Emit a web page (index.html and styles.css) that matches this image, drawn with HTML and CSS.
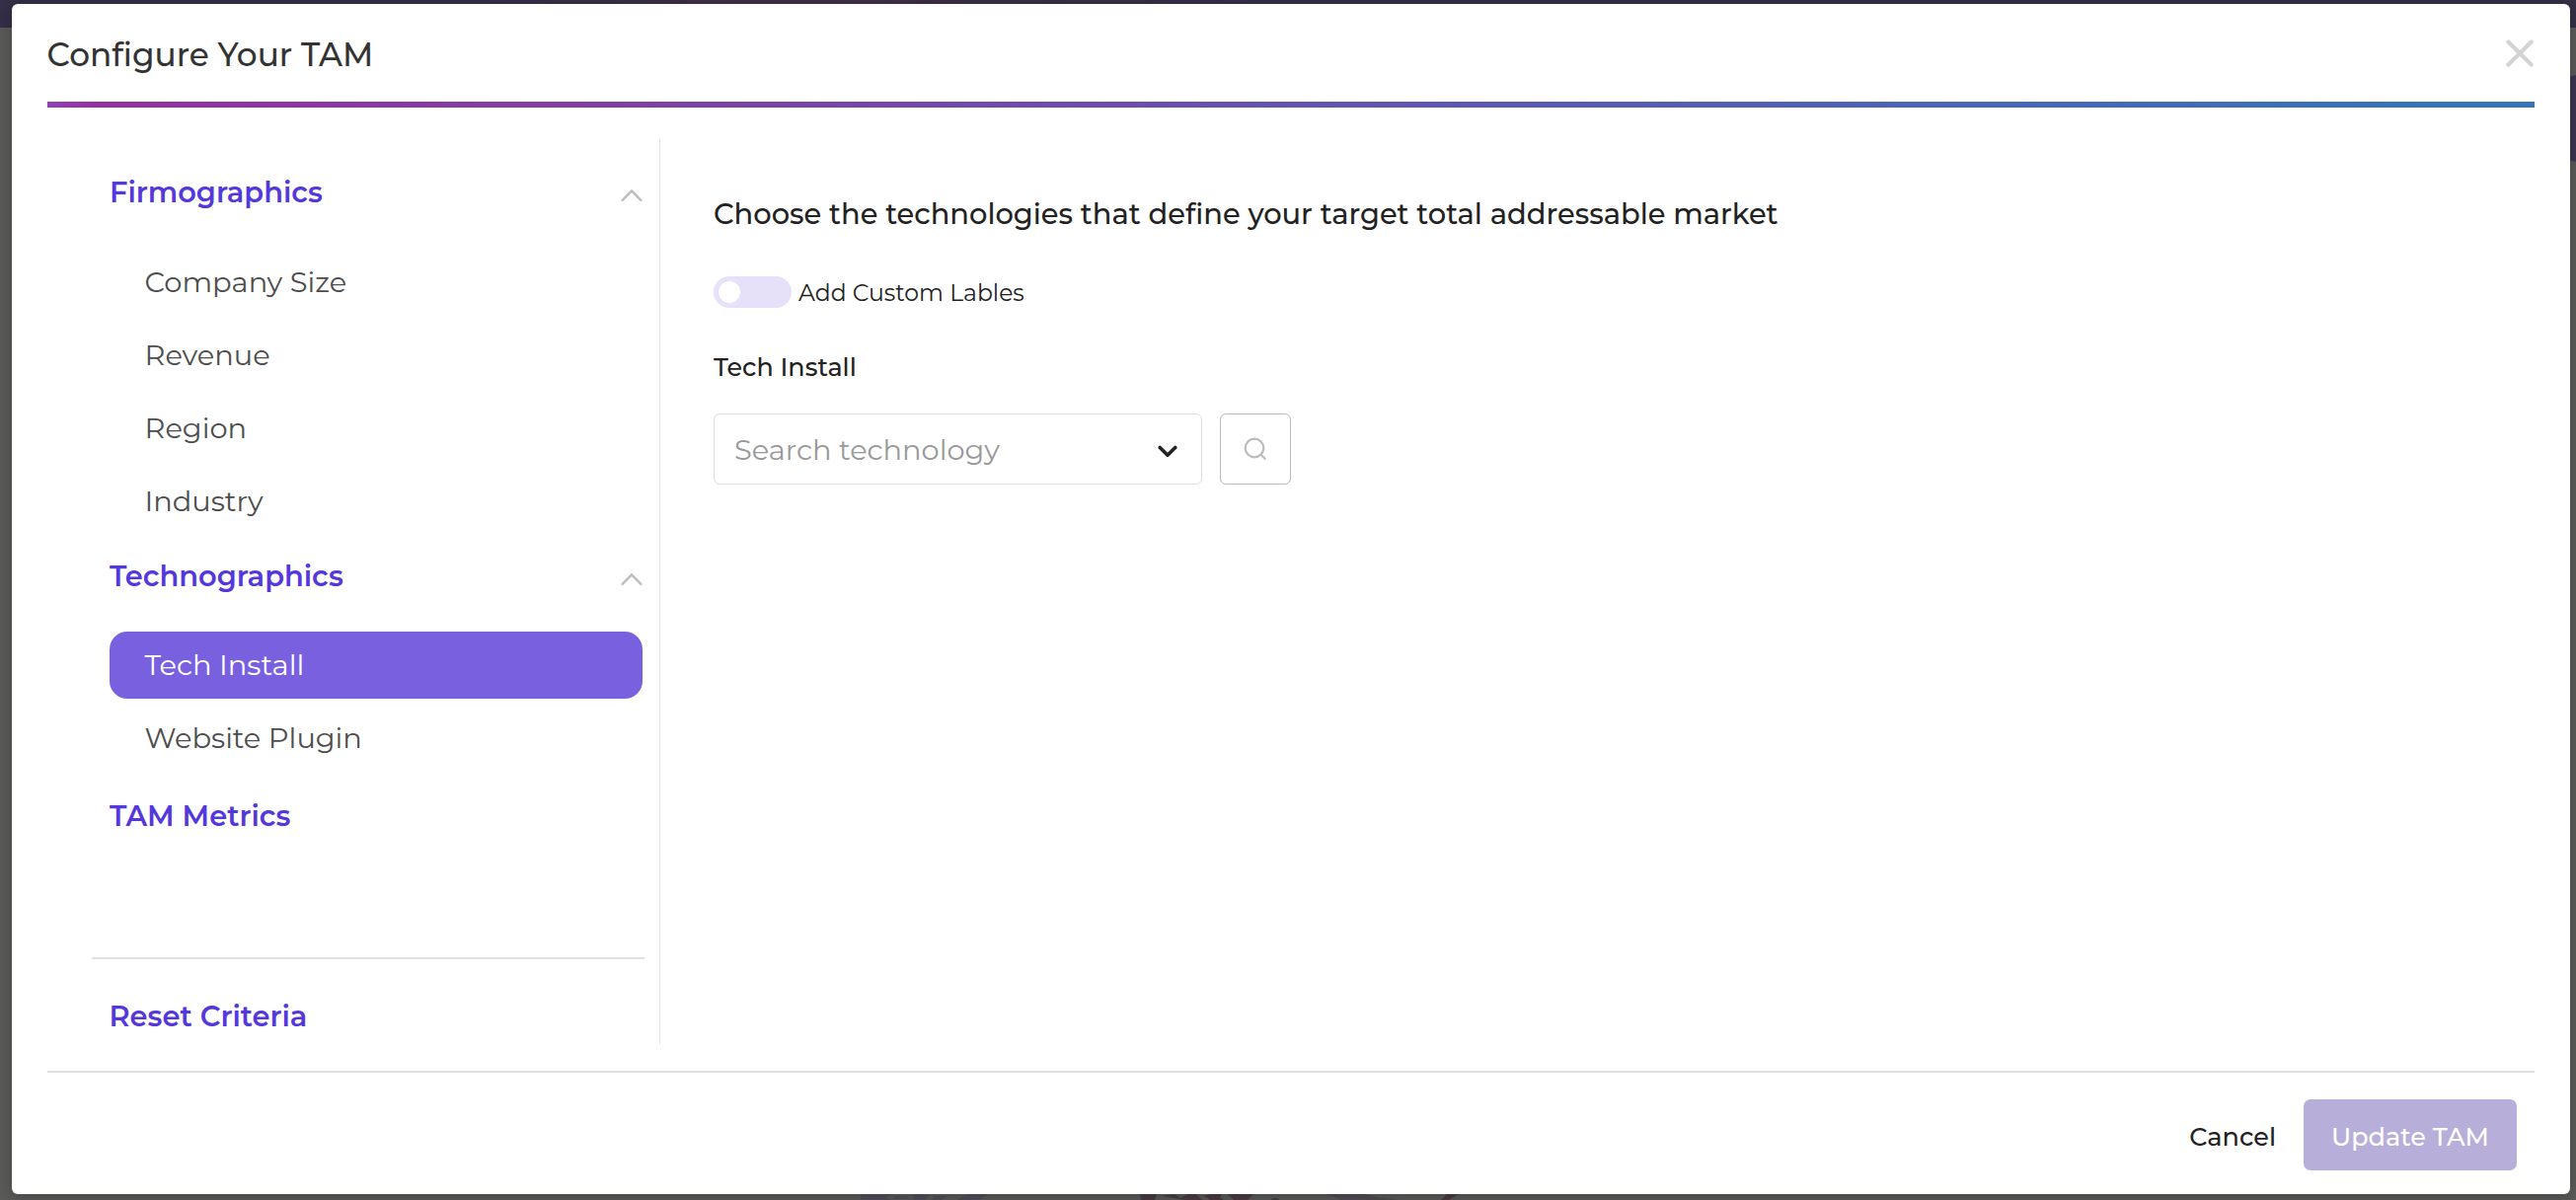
FILE: index.html
```html
<!DOCTYPE html>
<html lang="en">
<head>
<meta charset="utf-8">
<title>Configure Your TAM</title>
<link rel="stylesheet" href="styles.css">
</head>
<body>
<div class="backdrop">
  <div class="page-nav"></div>
  <div class="page-bubble"></div>
  <svg class="page-map" width="720" height="6" viewBox="0 0 720 6">
    <g fill="#54505c"><path d="M12 0H44L38 3L44 6H12z"/><path d="M46 2H60V5H46zM64 0H82L78 6H66zM86 2H100L94 6H84zM114 3L124 0H142L132 6H110z"/></g>
    <path fill="#4b3c46" d="M295 0H312L310 6H296zM318 2L330 0L336 4L344 0H352L358 6H340zM360 2L368 0H378L376 3L380 6H366zM384 0H410L404 6H390zM427 6Q432 2 437 6zM606 0H618L608 6H600z"/>
    <path fill="#534c56" d="M484 0H520L540 4L560 6H500z"/>
  </svg>
</div>
<main class="modal">
  <header class="modal-header">
    <h1 class="title">Configure Your TAM</h1>
    <button class="close" aria-label="Close">
      <svg width="28" height="28" viewBox="0 0 28 28"><path d="M2.4 2.4L25.6 25.6M25.6 2.4L2.4 25.6" stroke="#d3d3d3" stroke-width="4.2" stroke-linecap="round"/></svg>
    </button>
  </header>
  <div class="accent"></div>
  <div class="modal-body">
    <nav class="sidebar">
      <section class="group">
        <h2 class="group-title"><span>Firmographics</span>
          <svg class="caret" width="24" height="14" viewBox="0 0 24 14"><path d="M2.5 12L12 2.3L21.5 12"/></svg></h2>
        <ul class="items first">
          <li class="item">Company Size</li>
          <li class="item">Revenue</li>
          <li class="item">Region</li>
          <li class="item">Industry</li>
        </ul>
      </section>
      <section class="group">
        <h2 class="group-title"><span>Technographics</span>
          <svg class="caret" width="24" height="14" viewBox="0 0 24 14"><path d="M2.5 12L12 2.3L21.5 12"/></svg></h2>
        <ul class="items">
          <li class="item active">Tech Install</li>
          <li class="item">Website Plugin</li>
        </ul>
      </section>
      <h2 class="group-title metrics">TAM Metrics</h2>
      <div class="reset"><a class="group-title">Reset Criteria</a></div>
    </nav>
    <section class="content">
      <h2 class="lead">Choose the technologies that define your target total addressable market</h2>
      <label class="toggle-row"><span class="toggle"><span class="knob"></span></span><span class="toggle-text">Add Custom Lables</span></label>
      <h3 class="field-label">Tech Install</h3>
      <div class="search-row">
        <div class="select"><span>Search technology</span>
          <svg width="20" height="13" viewBox="0 0 20 13"><path d="M2.2 2.4L10 10.2L17.8 2.4" fill="none" stroke="#222" stroke-width="3.6" stroke-linecap="round" stroke-linejoin="round"/></svg>
        </div>
        <button class="search" aria-label="Search">
          <svg width="24" height="24" viewBox="0 0 24 24"><path d="M17.6 17.8L21.6 21.8M20.3 11A9.3 9.3 0 1 1 1.7 11A9.3 9.3 0 1 1 20.3 11z" fill="none" stroke="#bbb" stroke-width="2.2" stroke-linecap="round"/></svg>
        </button>
      </div>
    </section>
  </div>
  <footer class="modal-footer">
    <button class="cancel">Cancel</button>
    <button class="update">Update TAM</button>
  </footer>
</main>
</body>
</html>
```
FILE: styles.css
```css
* { box-sizing: border-box; }
body {
  margin: 0;
  height: 1216px;
  padding: 4px 6px 6px 12px;
  overflow: hidden;
  background: #5b5b5a;
  font-family: Montserrat, Inter, "Open Sans", sans-serif;
  font-variant-ligatures: none;
  color: #222;
}
h1, h2, h3, ul { margin: 0; padding: 0; font-weight: inherit; }
ul { list-style: none; }
button { border: 0; padding: 0; background: none; font: inherit; color: inherit; font-variant-ligatures: none; }
svg { display: block; fill: none; }

/* dimmed page behind the dialog */
.backdrop { position: absolute; inset: 0; overflow: hidden; }
.page-nav { height: 28px; background: linear-gradient(90deg, #352f47 18%, #402f45 30%, #352f47 50%); }
.page-bubble { position: absolute; right: -48px; top: 76px; width: 88px; height: 88px; border-radius: 50%; background: #3e3652; }
.page-map { position: absolute; left: 860px; bottom: 0; }

.modal {
  position: relative;
  height: 1206px;
  display: flex;
  flex-direction: column;
  padding: 0 36px;
  border-radius: 6px;
  background: #fff;
  box-shadow: 0 4px 18px rgba(0, 0, 0, .25);
}
.modal-header { height: 99px; display: flex; align-items: center; justify-content: space-between; }
.title { margin: 3px 0 0 -.5px; font-size: 32.75px; line-height: 40px; font-weight: 500; color: #333; }
.close { margin-right: 1px; }
.accent { height: 6px; background: linear-gradient(90deg, #8f42b6 0, #962fa3 50px, #3673bb 2400px, #3673bb 100%); }
.modal-body { flex: 1; display: flex; padding: 32px 0 27px; }

.sidebar { width: 621px; padding: 34px 16px 0 45px; border-right: 1px solid #e4e4e4; }
.group { padding: 0 1px 22px 18px; }
.group-title {
  display: flex; justify-content: space-between; align-items: center;
  font-size: 28.9px; line-height: 40px; font-weight: 600; color: #5438dc;
}
.caret { margin: 5px -1px 0 0; }
.caret path { stroke: #bbb; stroke-width: 2.4; stroke-linecap: round; stroke-linejoin: round; }
.items { margin-top: 36px; display: grid; gap: 6px; }
.items.first { margin-top: 37px; }
.item { height: 68px; padding-left: 35.5px; border-radius: 18px; font-size: 28.9px; line-height: 68px; color: #4d4d4d; }
.item.active { background: #7860df; color: #fff; }
.metrics { margin: 3px 0 0 18px; }
.reset { margin: 123px -1px 0 0; padding: 38px 0 0 17.5px; border-top: 2px solid #e0e0e0; }

.content { padding: 56px 0 0 54px; }
.lead { font-size: 28.93px; line-height: 40px; font-weight: 500; }
.toggle-row { display: flex; align-items: center; gap: 7px; margin-top: 43px; font-size: 23.5px; line-height: 32px; }
.toggle { width: 79px; height: 32px; border-radius: 16px; padding: 5px; background: #e6e0f8; }
.toggle-text { height: 32px; line-height: 34px; }
.knob { display: block; width: 22px; height: 22px; border-radius: 50%; background: #fff; }
.field-label { margin-top: 44px; font-size: 25.4px; line-height: 32px; font-weight: 500; }
.search-row { display: flex; gap: 18px; margin-top: 31px; }
.select {
  width: 495px; height: 72px; display: flex; align-items: center; justify-content: space-between;
  padding: 0 24px 0 20px; border: 1px solid #ddd; border-radius: 6px;
  font-size: 28.85px; color: #999;
}
.select svg { margin-top: 4px; }
.search { width: 72px; height: 72px; display: grid; place-items: center; border: 1px solid #bbb; border-radius: 6px; }

.modal-footer {
  height: 125px; display: flex; justify-content: flex-end; gap: 28px;
  padding: 27px 18px 24px 0; border-top: 2px solid #e0e0e0;
  font-size: 25.5px; font-weight: 500;
}
.cancel { height: 72px; line-height: 76px; }
.update { width: 216px; height: 72px; line-height: 76px; border-radius: 7px; background: #b7aed9; color: #fff; }
```
